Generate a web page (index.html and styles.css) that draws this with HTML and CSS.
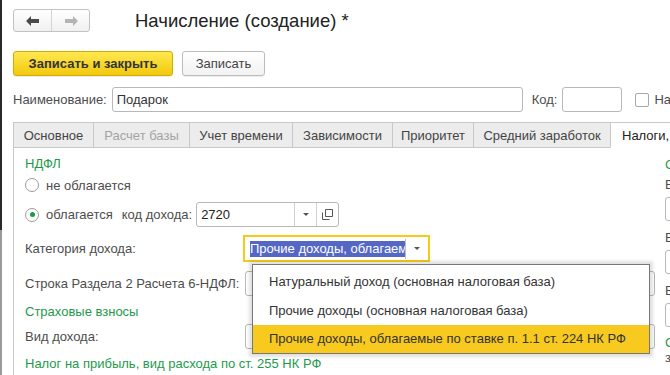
FILE: index.html
```html
<!DOCTYPE html>
<html lang="ru">
<head>
    <meta charset="UTF-8">
    <title>Начисление (создание)</title>
    <link rel="stylesheet" href="styles.css">
</head>
<body>
<div class="page">
    <div class="titlebar">
        <div class="nav">
            <span class="nav-btn">
                <svg width="14" height="10" viewBox="0 0 14 10"><path d="M0 5 L5 0 L5 3 L13 3 L13 7 L5 7 L5 10 Z" fill="#4a4a4a"/></svg>
            </span>
            <span class="nav-btn">
                <svg width="14" height="10" viewBox="0 0 14 10"><path d="M14 5 L9 0 L9 3 L1 3 L1 7 L9 7 L9 10 Z" fill="#b4b4b4"/></svg>
            </span>
        </div>
        <h1 class="title">Начисление (создание) *</h1>
    </div>

    <div class="commands">
        <span class="btn btn-primary">Записать и закрыть</span>
        <span class="btn">Записать</span>
    </div>

    <div class="name-row">
        <span class="name-label">Наименование:</span>
        <span class="input name-input">Подарок</span>
        <span class="code-label">Код:</span>
        <span class="input code-input"></span>
        <span class="checkbox"></span>
        <span class="check-label">Начисление</span>
    </div>

    <div class="tabs">
        <span class="tab w1">Основное</span>
        <span class="tab w2 disabled">Расчет базы</span>
        <span class="tab w3">Учет времени</span>
        <span class="tab w4">Зависимости</span>
        <span class="tab w5">Приоритет</span>
        <span class="tab w6">Средний заработок</span>
        <span class="tab active">Налоги, взносы</span>
    </div>

    <div class="panel">
        <div class="col-left">
            <div class="group-title">НДФЛ</div>
            <div class="radio-row">
                <span class="radio"></span>
                <span>не облагается</span>
            </div>
            <div class="radio-row code-row">
                <span class="radio checked"></span>
                <span>облагается</span>
                <span class="income-code-label">код дохода:</span>
                <span class="input combo">
                    <span class="combo-text">2720</span>
                    <span class="combo-btn"><span class="arrow"></span></span>
                    <span class="combo-btn">
                        <svg width="11" height="11" viewBox="0 0 11 11"><path d="M3.5 0.5 H10.5 V7.5 H3.5 Z M0.5 3.5 V10.5 H7.5" fill="none" stroke="#555"/></svg>
                    </span>
                </span>
            </div>
            <div class="field-row category-row">
                <span class="field-label">Категория дохода:</span>
                <span class="focus-box">
                    <span class="focus-text"><span class="selection">Прочие доходы, облагаемые по ставке п. 1.1 ст. 224 НК РФ</span></span>
                    <span class="combo-btn focus-btn"><span class="arrow"></span></span>
                </span>
            </div>
            <div class="field-row line-row">
                <span class="field-label">Строка Раздела 2 Расчета 6-НДФЛ:</span>
                <span class="input wide-input"></span>
            </div>
            <div class="group-title insurance">Страховые взносы</div>
            <div class="field-row kind-row">
                <span class="field-label">Вид дохода:</span>
                <span class="input wide-input"></span>
            </div>
            <div class="group-title profit">Налог на прибыль, вид расхода по ст. 255 НК РФ</div>
        </div>

        <div class="col-right">
            <div class="group-title r-title">Сведения</div>
            <div class="r-label">Вид</div>
            <span class="input r-input"></span>
            <div class="r-label r-gap">Вид</div>
            <span class="input r-input"></span>
            <div class="r-label r-gap">Вид</div>
            <span class="input r-input"></span>
            <div class="group-title r-title2">Сведения</div>
            <div class="r-small">затраты</div>
        </div>
    </div>

    <div class="popup">
        <div class="popup-item">Натуральный доход (основная налоговая база)</div>
        <div class="popup-item">Прочие доходы (основная налоговая база)</div>
        <div class="popup-item current">Прочие доходы, облагаемые по ставке п. 1.1 ст. 224 НК РФ</div>
    </div>
</div>
</body>
</html>
```

FILE: styles.css
```css
body {
    margin: 0;
    padding: 0;
    background-color: #fff;
    font-family: "Liberation Sans", Arial, sans-serif;
    font-size: 13px;
    color: #4d4d4d;
    overflow: hidden;
}

.page {
    position: relative;
    width: 900px;
    height: 375px;
    padding-left: 11px;
    border-left: 2px solid #2a2a2a;
    border-image: linear-gradient(#2a2a2a 230px, #9a9a9a 230px) 1;
}

/* title */
.titlebar {
    display: flex;
    align-items: center;
    padding-top: 9px;
}

.nav {
    display: flex;
    height: 23px;
    border: 1px solid #c2c2c2;
    border-radius: 3px;
    box-sizing: border-box;
    background: linear-gradient(#fff, #f0f0f0);
}

.nav-btn {
    display: flex;
    align-items: center;
    justify-content: center;
    width: 37px;
}

.nav-btn + .nav-btn {
    border-left: 1px solid #d4d4d4;
}

.title {
    margin: 0 0 0 45px;
    font-size: 18.5px;
    font-weight: 400;
    color: #222;
}

/* command bar */
.commands {
    display: flex;
    gap: 9px;
    margin-top: 19px;
}

.btn {
    display: flex;
    align-items: center;
    justify-content: center;
    height: 25px;
    box-sizing: border-box;
    width: 83px;
    border: 1px solid #bdbdbd;
    border-radius: 3px;
    background: linear-gradient(#fff, #f2f2f2);
    color: #444;
    box-shadow: 0 1px 1px rgba(0, 0, 0, 0.08);
}

.btn-primary {
    width: 160px;
    font-weight: 700;
    color: #333;
    border-color: #d4ac00;
    background: linear-gradient(#ffe84e, #f2c90e);
}

/* name row */
.name-row {
    display: flex;
    align-items: center;
    margin-top: 11px;
    height: 25px;
}

.input {
    display: flex;
    align-items: center;
    height: 25px;
    box-sizing: border-box;
    border: 1px solid #b8b8b8;
    border-radius: 3px;
    background: #fff;
    padding-left: 4px;
    color: #333;
}

.name-input {
    width: 411px;
    margin-left: 5px;
}

.code-label {
    margin-left: 9px;
}

.code-input {
    width: 60px;
    margin-left: 5px;
}

.checkbox {
    width: 14px;
    height: 14px;
    box-sizing: border-box;
    border: 1px solid #a8a8a8;
    border-radius: 2px;
    margin-left: 13px;
}

.check-label {
    margin-left: 5px;
    white-space: nowrap;
}

/* tabs */
.tabs {
    display: flex;
    margin-top: 10px;
    height: 26px;
}

.tab {
    display: flex;
    align-items: center;
    justify-content: center;
    box-sizing: border-box;
    height: 26px;
    border: 1px solid #c8c8c8;
    background: #ececec;
    color: #444;
    margin-left: -1px;
    white-space: nowrap;
}

.tab.w1 { width: 81px; margin-left: 0; }
.tab.w2 { width: 97px; }
.tab.w3 { width: 104px; }
.tab.w4 { width: 101px; }
.tab.w5 { width: 82px; }
.tab.w6 { width: 138px; }

.tab.disabled {
    color: #a4a4a4;
}

.tab.active {
    width: 130px;
    justify-content: flex-start;
    padding-left: 11px;
    background: #fff;
    border-bottom-color: #fff;
    color: #222;
}

/* content */
.panel {
    display: flex;
    gap: 8px;
    height: 230px;
    border-left: 1px solid #c8c8c8;
    padding-left: 11px;
}

.col-left {
    width: 632px;
    flex: none;
}

.group-title {
    color: #1d9a4c;
    line-height: 20px;
    white-space: nowrap;
}

.col-left > .group-title:first-child {
    margin-top: 6px;
}

.radio-row {
    display: flex;
    align-items: center;
    height: 20px;
    margin-top: 1px;
}

.radio {
    width: 14px;
    height: 14px;
    box-sizing: border-box;
    border: 1px solid #9c9c9c;
    border-radius: 50%;
    margin-right: 7px;
    display: flex;
    align-items: center;
    justify-content: center;
}

.radio.checked::after {
    content: "";
    width: 5px;
    height: 5px;
    border-radius: 50%;
    background: #1d9a4c;
}

.code-row {
    height: 25px;
    margin-top: 7px;
}

.income-code-label {
    margin-left: 9px;
}

.combo {
    width: 143px;
    margin-left: 4px;
    padding-left: 0;
}

.combo-text {
    flex: 1;
    padding-left: 4px;
    color: #222;
}

.combo-btn {
    display: flex;
    align-items: center;
    justify-content: center;
    width: 21px;
    height: 23px;
    border-left: 1px solid #d0d0d0;
}

.arrow {
    width: 0;
    height: 0;
    border-left: 3px solid transparent;
    border-right: 3px solid transparent;
    border-top: 3px solid #555;
}

.field-row {
    display: flex;
    align-items: center;
}

.field-label {
    width: 218px;
    flex: none;
    white-space: nowrap;
}

.category-row {
    height: 27px;
    margin-top: 8px;
}

.focus-box {
    display: flex;
    align-items: center;
    width: 187px;
    height: 27px;
    box-sizing: border-box;
    border: 2px solid #f6c91b;
    margin-left: 0;
}

.focus-text {
    width: 156px;
    overflow: hidden;
    white-space: nowrap;
    padding-left: 5px;
}

.selection {
    background: #5467c4;
    color: #fff;
    line-height: 16px;
    display: inline-block;
}

.focus-btn {
    height: 20px;
    width: 22px;
    border-left: 1px solid #c0c0c0;
}

.line-row {
    height: 25px;
    margin-top: 9px;
}

.wide-input {
    width: 410px;
    margin-left: 2px;
}

.insurance {
    margin-top: 6px;
}

.kind-row {
    height: 25px;
    margin-top: 2px;
}

.profit {
    margin-top: 5px;
}

/* right column, mostly off screen */
.col-right {
    width: 200px;
    flex: none;
}

.r-title {
    margin-top: 7px;
}

.r-label {
    line-height: 20px;
}

.r-gap {
    margin-top: 7px;
}

.r-input {
    width: 180px;
    height: 24px;
    margin-top: 2px;
}

.r-title2 {
    line-height: 16px;
    margin-top: 8px;
}

.r-small {
    line-height: 14px;
}

/* dropdown list */
.popup {
    position: absolute;
    left: 250px;
    top: 264px;
    width: 398px;
    box-sizing: border-box;
    border: 1px solid #787878;
    background: #fff;
    box-shadow: 0 0 3px 3px rgba(0, 0, 0, 0.12);
    padding-top: 2px;
}

.popup-item {
    height: 29px;
    line-height: 29px;
    padding-left: 16px;
    color: #333;
    white-space: nowrap;
}

.popup-item.current {
    background: #f8c91e;
    height: 28px;
    line-height: 28px;
}
```
